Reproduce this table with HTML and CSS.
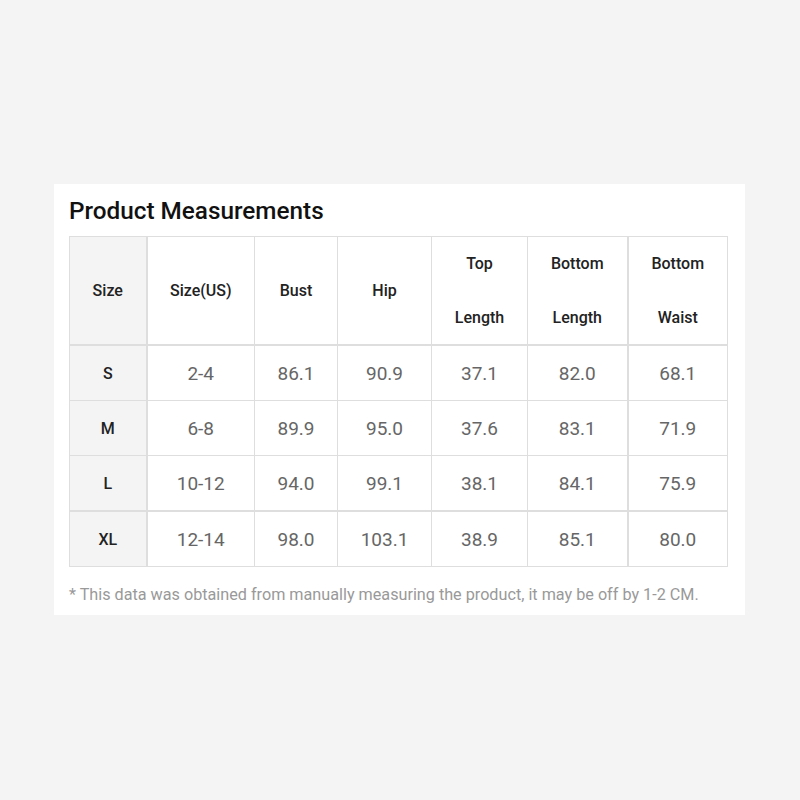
FILE: index.html
```html
<!DOCTYPE html>
<html>
<head>
<meta charset="utf-8">
<link rel="stylesheet" href="styles.css">
</head>
<body>
<div class="card">
  <h2 class="title">Product Measurements</h2>
  <table class="sizes">
    <colgroup>
      <col class="c1"><col class="c2"><col class="c3"><col class="c4"><col class="c5"><col class="c6"><col class="c7">
    </colgroup>
    <thead>
      <tr>
        <th class="size-col">Size</th>
        <th>Size(US)</th>
        <th>Bust</th>
        <th>Hip</th>
        <th>Top<br>Length</th>
        <th>Bottom<br>Length</th>
        <th class="last">Bottom<br>Waist</th>
      </tr>
    </thead>
    <tbody>
      <tr><td class="size-col">S</td><td>2-4</td><td>86.1</td><td>90.9</td><td>37.1</td><td>82.0</td><td class="last">68.1</td></tr>
      <tr><td class="size-col">M</td><td>6-8</td><td>89.9</td><td>95.0</td><td>37.6</td><td>83.1</td><td class="last">71.9</td></tr>
      <tr><td class="size-col">L</td><td>10-12</td><td>94.0</td><td>99.1</td><td>38.1</td><td>84.1</td><td class="last">75.9</td></tr>
      <tr class="xl"><td class="size-col">XL</td><td>12-14</td><td>98.0</td><td>103.1</td><td>38.9</td><td>85.1</td><td class="last">80.0</td></tr>
    </tbody>
  </table>
  <p class="note">* This data was obtained from manually measuring the product, it may be off by 1-2 CM.</p>
</div>
</body>
</html>
```
FILE: styles.css
```css
html, body {
  margin: 0;
  padding: 0;
  background: #f4f4f4;
  font-family: Roboto, "Liberation Sans", sans-serif;
}
.card {
  margin: 184px 0 0 54px;
  width: 691px;
  box-sizing: border-box;
  height: 431px;
  background: #ffffff;
  padding: 13px 18px 10px 15px;
}
.title {
  margin: 0 0 12px 0;
  font-size: 24.3px;
  line-height: 27px;
  font-weight: 500;
  color: #111;
}
.sizes {
  width: 658px;
  table-layout: fixed;
  border-collapse: collapse;
  text-align: center;
}
.c1 { width: 77px; }
.c2 { width: 108px; }
.c3 { width: 83px; }
.c4 { width: 94px; }
.c5 { width: 96px; }
.c6 { width: 100px; }
.c7 { width: 100px; }
.sizes th, .sizes td {
  border: 1px solid #dedede;
  padding: 0;
}
.sizes th {
  height: 107px;
  font-size: 16px;
  line-height: 53.5px;
  font-weight: 500;
  color: #222;
  border-bottom: 2px solid #dedede;
}
.sizes td {
  height: 54px;
  font-size: 19px;
  color: #666;
}
.sizes .xl td {
  border-top: 2px solid #dedede;
}
.sizes .last {
  border-left: 2px solid #dedede;
}
.sizes .size-col {
  background: #f4f4f4;
  font-size: 16px;
  font-weight: 500;
  color: #222;
  border-right: 2px solid #dedede;
}
.note {
  margin: 18px 0 0 0;
  font-size: 16.2px;
  line-height: 20px;
  color: #999;
}
```
